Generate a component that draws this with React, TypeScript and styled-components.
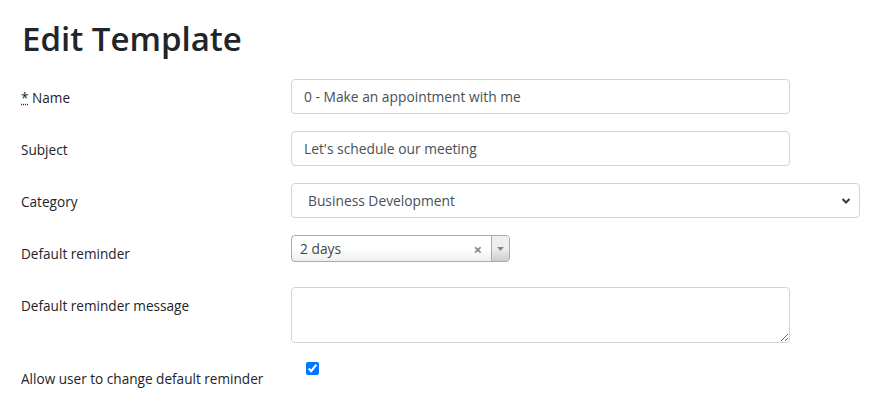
import React from "react";
import styled, { createGlobalStyle } from "styled-components";

const Global = createGlobalStyle`
  html, body { margin: 0; padding: 0; background: #fff; }
  body {
    font-family: "Open Sans", "Noto Sans", sans-serif;
    font-size: 14px;
    color: #212529;
  }
  * { box-sizing: border-box; }
`;

const Page = styled.div`
  padding: 18px 25px 0 21px;
`;

const Title = styled.h1`
  margin: 0 0 19px 1px;
  font-size: 33px;
  line-height: 42px;
  font-weight: 600;
  color: #212529;
`;

const Form = styled.form`
  display: flex;
  flex-direction: column;
  gap: 17px;
`;

const Row = styled.div`
  display: grid;
  grid-template-columns: 270px 1fr;
  align-items: start;
  min-height: 35px;
`;

const Label = styled.label`
  padding-top: 8px;
  line-height: 21px;
  font-size: 13.6px;
`;

const Req = styled.abbr`
  text-decoration: underline dotted;
  cursor: help;
`;

const TextInput = styled.input<{ $w: number }>`
  width: ${(p) => p.$w}px;
  height: 35px;
  padding: 0 12px;
  border: 1px solid #ced4da;
  border-radius: 4px;
  font: inherit;
  font-size: 13.8px;
  color: #495057;
  background: #fff;
  outline: none;
`;

const SelectBox = styled.div<{ $w: number }>`
  width: ${(p) => p.$w}px;
  height: 35px;
  display: flex;
  align-items: center;
  justify-content: space-between;
  padding: 0 8px 0 16px;
  border: 1px solid #ced4da;
  border-radius: 4px;
  font-size: 13.8px;
  color: #495057;
  background: #fff;
`;

const Select2 = styled.div`
  width: 219px;
  height: 27px;
  display: flex;
  align-items: stretch;
  border: 1px solid #aaa;
  border-radius: 4px;
  background: linear-gradient(#fff 50%, #eee);
  font-size: 13.8px;
  color: #444;
  overflow: hidden;
`;

const Select2Text = styled.span`
  flex: 1;
  display: flex;
  align-items: center;
  padding-left: 8px;
  line-height: 25px;
`;

const Clear = styled.span`
  display: flex;
  align-items: center;
  padding-right: 9px;
  color: #888;
  font-weight: 700;
  font-size: 15px;
`;

const Arrow = styled.span`
  width: 18px;
  display: flex;
  align-items: center;
  justify-content: center;
  border-left: 1px solid #aaa;
  background: linear-gradient(#eee 50%, #ccc);
`;

const TextArea = styled.textarea<{ $w: number }>`
  display: block;
  width: ${(p) => p.$w}px;
  height: 56px;
  padding: 6px 12px;
  border: 1px solid #ced4da;
  border-radius: 4px;
  font: inherit;
  color: #495057;
  outline: none;
`;

const Check = styled.input`
  width: 13px;
  height: 13px;
  margin: 2px 0 0 15px;
`;

export default function App() {
  return (
    <Page>
      <Global />
      <Title>Edit Template</Title>
      <Form>
        <Row>
          <Label>
            <Req title="required">*</Req> Name
          </Label>
          <TextInput $w={499} defaultValue="0 - Make an appointment with me" />
        </Row>
        <Row>
          <Label>Subject</Label>
          <TextInput $w={499} defaultValue="Let's schedule our meeting" />
        </Row>
        <Row>
          <Label>Category</Label>
          <SelectBox $w={569}>
            <span>Business Development</span>
            <svg width="10" height="8" viewBox="0 0 10 8">
              <path d="M1.5 2 L5 5.5 L8.5 2" fill="none" stroke="#343a40" strokeWidth="2" />
            </svg>
          </SelectBox>
        </Row>
        <Row>
          <Label>Default reminder</Label>
          <Select2>
            <Select2Text>2 days</Select2Text>
            <Clear>×</Clear>
            <Arrow>
              <svg width="7" height="4" viewBox="0 0 7 4">
                <path d="M0 0 L7 0 L3.5 4 Z" fill="#888" />
              </svg>
            </Arrow>
          </Select2>
        </Row>
        <Row>
          <Label>Default reminder message</Label>
          <TextArea $w={499} />
        </Row>
        <Row>
          <Label>Allow user to change default reminder</Label>
          <Check type="checkbox" defaultChecked />
        </Row>
      </Form>
    </Page>
  );
}
